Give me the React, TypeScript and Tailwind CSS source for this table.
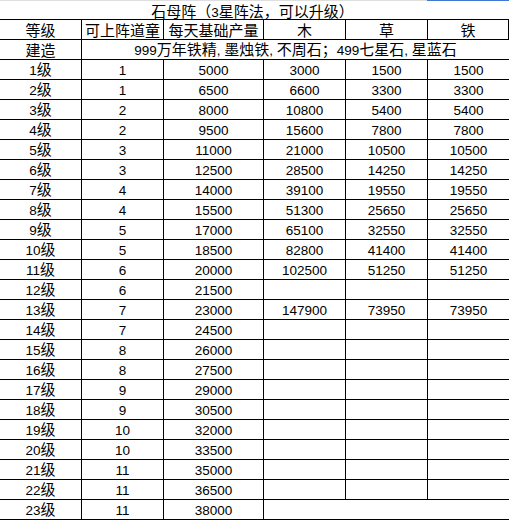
import React from 'react'

type Row = [string, string, string, string?, string?, string?]

const rows: Row[] = [
  ['1级', '1', '5000', '3000', '1500', '1500'],
  ['2级', '1', '6500', '6600', '3300', '3300'],
  ['3级', '2', '8000', '10800', '5400', '5400'],
  ['4级', '2', '9500', '15600', '7800', '7800'],
  ['5级', '3', '11000', '21000', '10500', '10500'],
  ['6级', '3', '12500', '28500', '14250', '14250'],
  ['7级', '4', '14000', '39100', '19550', '19550'],
  ['8级', '4', '15500', '51300', '25650', '25650'],
  ['9级', '5', '17000', '65100', '32550', '32550'],
  ['10级', '5', '18500', '82800', '41400', '41400'],
  ['11级', '6', '20000', '102500', '51250', '51250'],
  ['12级', '6', '21500', '', '', ''],
  ['13级', '7', '23000', '147900', '73950', '73950'],
  ['14级', '7', '24500'],
  ['15级', '8', '26000'],
  ['16级', '8', '27500'],
  ['17级', '9', '29000'],
  ['18级', '9', '30500'],
  ['19级', '10', '32000'],
  ['20级', '10', '33500'],
  ['21级', '11', '35000'],
  ['22级', '11', '36500'],
  ['23级', '11', '38000'],
]

// split text into CJK / latin runs so digits get the narrower latin face
function Txt({ s }: { s: string }) {
  const parts = s.match(/[\u3000-\u9fff\uff00-\uffef]+|[^\u3000-\u9fff\uff00-\uffef]+/g) || []
  return (
    <span className="whitespace-pre leading-[18px]">
      {parts.map((p, i) =>
        /[\u3000-\u9fff\uff00-\uffef]/.test(p) ? (
          <span key={i} className="text-[15px] font-['Noto_Sans_CJK_SC',sans-serif]">{p}</span>
        ) : (
          <span key={i} className="text-[13.5px] font-['Liberation_Sans',sans-serif]">{p}</span>
        )
      )}
    </span>
  )
}

function Cell({ s, border = true }: { s?: string; border?: boolean }) {
  return (
    <div className={`flex items-center justify-center ${border ? 'border-r border-black' : ''}`}>
      {s ? <Txt s={s} /> : null}
    </div>
  )
}

const grid = 'grid grid-cols-[82px_82px_100px_82px_82px_81px] h-5 border-b border-black'

export default function App() {
  return (
    <div className="w-[509px] h-[520px] overflow-hidden bg-white text-black">
      {/* selection strip at top */}
      <div className="flex h-px">
        <div className="w-[427px] bg-[#dedede]" />
        <div className="flex-1 bg-[#3f78d6]" />
      </div>

      {/* title */}
      <div className="flex h-[19px] items-center justify-center border-b border-black pt-[3px] pr-1">
        <Txt s="石母阵（3星阵法，可以升级）" />
      </div>

      {/* header */}
      <div className={grid}>
        <Cell s="等级" />
        <Cell s="可上阵道童" />
        <Cell s="每天基础产量" />
        <Cell s="木" />
        <Cell s="草" />
        <Cell s="铁" />
      </div>

      {/* build cost */}
      <div className="grid grid-cols-[82px_427px] h-5 border-b border-black">
        <Cell s="建造" />
        <div className="flex items-center justify-center">
          <Txt s="999万年铁精, 墨烛铁, 不周石；499七星石, 星蓝石" />
        </div>
      </div>

      {rows.map((r, i) => {
        const last = i === rows.length - 1
        return (
          <div key={r[0]} className={grid}>
            <Cell s={r[0]} />
            <Cell s={r[1]} />
            <Cell s={r[2]} />
            <Cell s={r[3]} border={!last} />
            <Cell s={r[4]} border={!last} />
            <Cell s={r[5]} border={false} />
          </div>
        )
      })}
    </div>
  )
}
